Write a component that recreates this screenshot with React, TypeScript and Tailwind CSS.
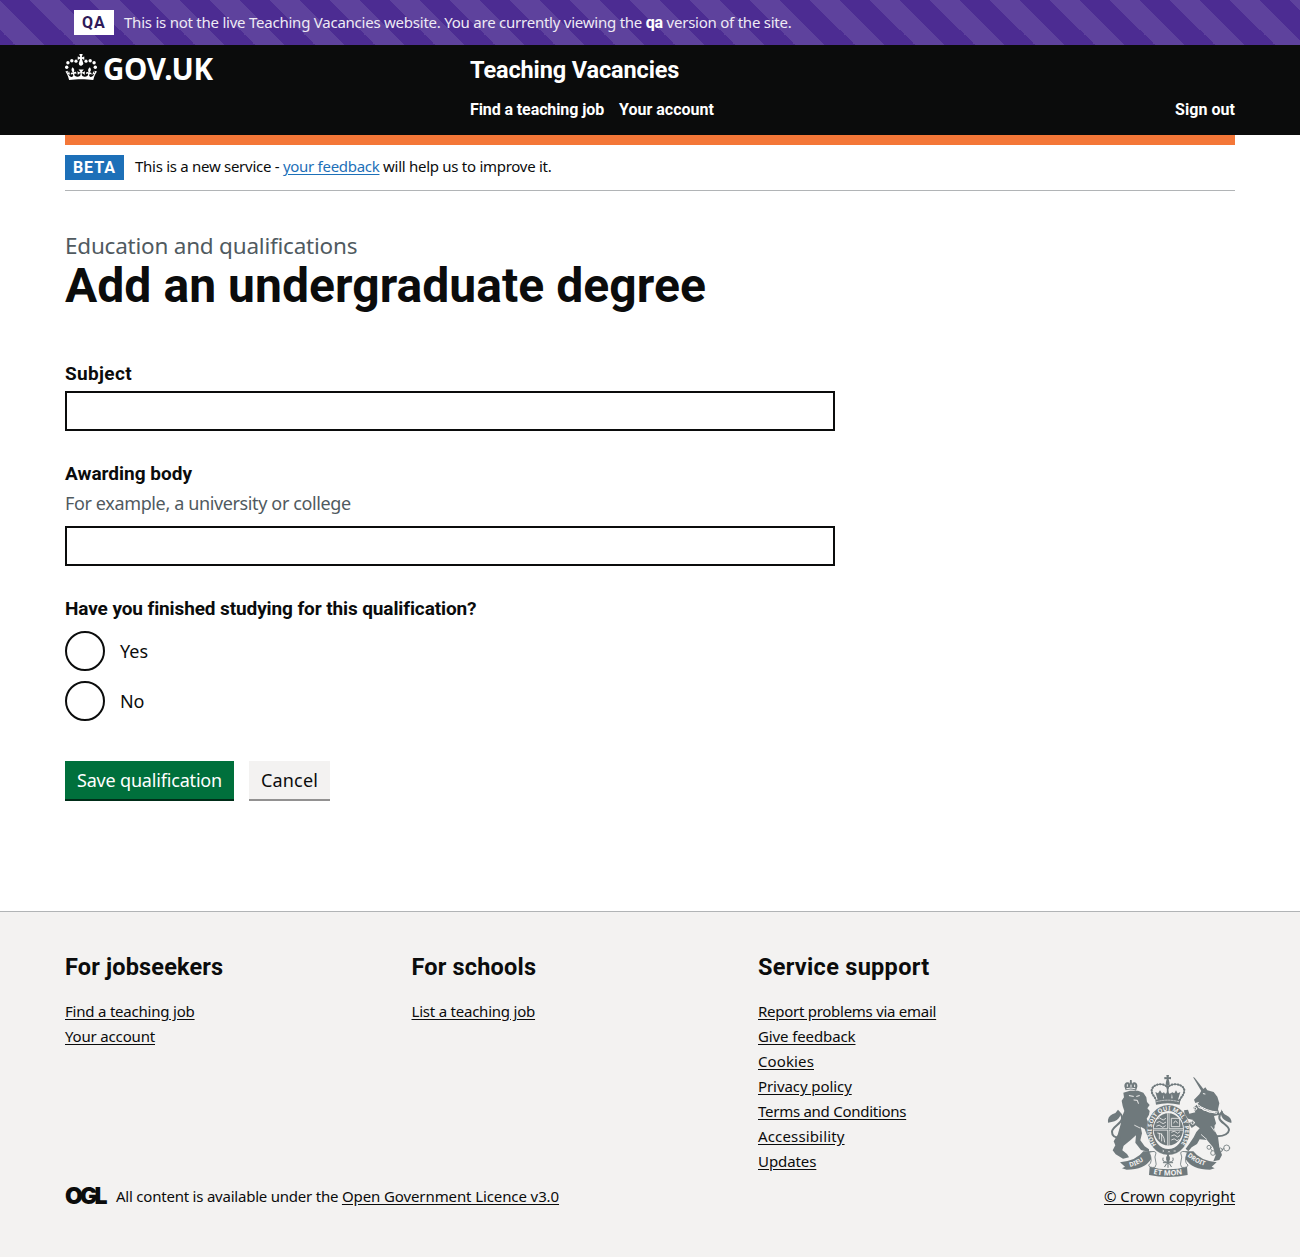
import React from "react";

const regular = "font-['Noto_Sans',sans-serif]";
const bold = "font-['Roboto',sans-serif] font-bold";

function Crown() {
  return (
    <svg className="mt-px h-[26px] w-8 shrink-0" viewBox="0 0 32 26" fill="currentColor" aria-hidden="true">
      <g>
        <circle cx="1.7" cy="13.3" r="1.7" />
        <circle cx="2.9" cy="8.8" r="1.7" />
        <circle cx="6.8" cy="6.7" r="1.7" />
        <circle cx="11" cy="7.2" r="1.6" />
        <circle cx="21" cy="7.2" r="1.6" />
        <circle cx="25.2" cy="6.7" r="1.7" />
        <circle cx="29.1" cy="8.8" r="1.7" />
        <circle cx="30.3" cy="13.3" r="1.7" />
      </g>
      <path d="M17 4.7l2.3 1.2V2.5l-2.3.7-.2-.2.9-3h-3.4l.9 3-.2.2c-.1.1-2.3-.7-2.3-.7v3.4L15 4.7c.1.1.1.2.2.2l-1.3 4c-.1.2-.1.4-.1.6 0 1.1.8 2 1.9 2.2h.7c1-.2 1.9-1.1 1.9-2.1 0-.2 0-.4-.1-.6l-1.3-4c-.1-.2 0-.2.1-.3" />
      <path
        transform="translate(0 -2.7) scale(1 .957)"
        d="M16 29.2c4.4 0 8.6.3 12.3.8 1.1-4.5 2.4-7 3.7-8.8l-2.5-.9c.2 1.3.3 1.9 0 2.7-.4-.4-.8-1.1-1.1-2.3l-1.2 4c.7-.5 1.3-.8 2-.9-1.1 2.5-2.6 3.1-3.5 3-1.1-.2-1.7-1.2-1.5-2.1.3-1.2 1.5-1.5 2.1-.1 1.1-2.3-.8-3-2-2.3 1.9-1.9 2.1-3.5.6-5.6-2.1 1.6-2.1 3.2-1.2 5.5-1.2-1.4-3.2-.6-2.5 1.6.9-1.4 2.1-.5 1.9.8-.2 1.1-1.7 2.1-3.5 1.9-2.7-.2-2.9-2.1-2.9-3.6.7-.1 1.9.5 2.9 1.9l.4-4.3c-1.1 1.1-2.1 1.4-3.2 1.4.4-1.2 2.1-3 2.1-3h-5.4s1.7 1.9 2.1 3c-1.1 0-2.1-.2-3.2-1.4l.4 4.3c1-1.4 2.2-2 2.9-1.9-.1 1.5-.2 3.4-2.9 3.6-1.9.2-3.4-.8-3.5-1.9-.2-1.3 1-2.2 1.9-.8.7-2.3-1.2-3-2.5-1.6.9-2.2.9-3.9-1.2-5.5-1.5 2-1.3 3.7.6 5.6-1.2-.7-3.1 0-2 2.3.6-1.4 1.8-1.1 2.1.1.2.9-.3 1.9-1.5 2.1-.9.2-2.4-.5-3.5-3 .6 0 1.2.3 2 .9l-1.2-4c-.3 1.1-.7 1.9-1.1 2.3-.3-.8-.2-1.4 0-2.7l-2.5.9c1.3 1.8 2.6 4.3 3.7 8.8 3.7-.5 7.9-.8 12.3-.8"
      />
    </svg>
  );
}

function RoyalArms() {
  const ink = "#6f797c";
  const paper = "#f3f2f1";
  const lettering = { fill: paper, fontFamily: "Noto Sans, sans-serif", fontWeight: 700 };
  return (
    <svg className="h-[102px] w-[125px]" viewBox="51 45 375 306" aria-hidden="true">
      <defs>
        <path id="garter" d="M199 255A50 61 0 1 1 271 255" />
        <path id="dieu" d="M120 321Q150 314 176 290" />
        <path id="etmon" d="M190 342Q235 351 281 342" />
        <path id="droit" d="M292 288Q318 312 358 321" />
      </defs>
      <g fill={ink} stroke="none">
        {/* lion */}
        <path d="M107 91l-4-12q0-11 9-12 5-1 7 4l1-11h5l1 11q3-5 8-4 9 2 8 13l-4 12q-16-6-31-1z" />
        <path d="M100 98l20-6 24 0 16 6 9 14 2 14 8 9-7 10 7 8-2 11-7 12 10 24 3 31-12-6-7-18-12-7 4 20-5 21 13 18 13 9 0 8-24-6-17-22 2-22-16 14-21 17-4 14 14 11 6 10-18 4-22-13-9-12 8-15-5-12 12-20 9-31 5-25 6-15-5-15-3-16 7-10z" />
        <path d="M54 188q-2-18 13-25 12-4 17-14 14 12 2 26-9 11-32 13z" />
        {/* unicorn */}
        <path d="M309 51l5 2 31 40-8 5z" />
        <path d="M334 92l12-10 6 9 19 5 11 14 6 20-4 18 5 16-17 4 6 22-6 18 12 22 4 32 8 23-8 15-18 4 7-18-8-24-18-22-22-2-8 14-16 10-10 12-8-8 12-16 12-18 8-16 10-11-12-9-12 8-9-14 14-10-16-4-10-12-2-13 12-2 4 12 18-4-6-14 12-10 6-8-12 4-4-10 16-16z" />
        <path d="M395 148q2 12 14 18 17 8 15 23-20-6-26-14-9-12-3-27z" />
        {/* central crown */}
        <path d="M229 45h8l-1 7 7-1v7l-7-1 2 9q3 8-5 12-8-4-5-12l2-9-7 1v-7l7 1z" />
        <path d="M196 120q37-12 75 0l-2 14q-36-9-71 0zM203 119l-7-23 8 4 6-9 6 9 7-4-4 21zM222 115l-1-17 7 3 5-10 5 10 8-3-2 17zM248 116l-3-20 8 4 5-9 5 9 8-4-7 23z" />
      </g>
      <g fill="none" stroke={ink} strokeLinecap="round">
        <path d="M89 232q-23 2-23-17c1-15 29-24 30-40 1-9-4-14-10-18" strokeWidth="6" />
        <path d="M382 229q33-2 35-19c0-14-27-22-29-36-1-9 3-14 8-18" strokeWidth="6" />
        <path d="M233 84c-5-16-45-16-48 7 0 12 8 17 13 28M233 84c5-16 47-16 50 7 0 12-8 17-13 28" strokeWidth="3" />
        <path d="M233 84c-5-16-45-16-48 7 0 12 8 17 13 28M233 84c5-16 47-16 50 7 0 12-8 17-13 28" strokeWidth="6.5" strokeDasharray="1.5 7" />
        <path d="M233 80v15" strokeWidth="5" />
        <ellipse cx="235" cy="210" rx="55" ry="66" strokeWidth="18" />
        <g strokeWidth="2.5">
          <circle cx="357" cy="262" r="6" /><circle cx="369" cy="279" r="7" /><circle cx="391" cy="270" r="6" /><circle cx="410" cy="264" r="9" />
          <path d="M362 266l4 6M376 276l9-4M397 268l5-2" />
        </g>
      </g>
      {/* face, crown and collar highlights */}
      <g fill="none" stroke={paper} strokeWidth="3" strokeLinecap="round">
        <path d="M118 107l12 2M140 109l8-2M132 120l10 1 3 9M112 74v5M123 75v5M134 75v5M110 86q13-4 25 0" />
        <path d="M200 125q33-9 66 0" strokeWidth="2" strokeDasharray="5 4" />
        <path d="M340 101l5 1M320 132q30 22 62 24M329 143q25 16 51 17M322 135l5 9 8-1 6 8 9 0 8 5 10-1 6 3" />
        <path d="M102 260l32-22M150 204l-16-8M350 238l-16-14M364 200l10 14" strokeWidth="2.5" />
        <circle cx="316" cy="146" r="4" /><circle cx="308" cy="188" r="5" /><circle cx="379" cy="198" r="4" />
      </g>
      {/* quartered shield inside the garter */}
      <ellipse cx="235" cy="208" rx="46" ry="51" fill={paper} />
      <ellipse cx="235" cy="208" rx="44" ry="48" fill={ink} />
      <g fill="none" stroke={paper} strokeWidth="2.5">
        <path d="M200 177q10-7 14 0t14-2M200 188q10-7 14 0t14-2M199 199q10-7 14 0t14-2M244 175h25v25h-25zM251 190q5-14 12 0M244 217q10-7 14 0t12-2M244 228q10-7 14 0t12-2M244 240q10-7 14 0t8-2" />
        <path d="M202 219q20 0 22 28M208 219v19M215 220v24" strokeWidth="2.5" />
        <path d="M235 160v96M191 208h88" strokeWidth="6.5" />
      </g>
      <path d="M235 160v96M191 208h88" stroke={ink} strokeWidth="2.5" />
      <ellipse cx="235" cy="210" rx="64" ry="75" fill="none" stroke={paper} strokeWidth="1.5" strokeDasharray="2 2" />
      <text fontSize="18" {...lettering}>
        <textPath href="#garter" textLength="262" lengthAdjust="spacing">HONI SOIT QUI MAL Y PENSE</textPath>
      </text>
      <path d="M218 271l4 4m0-4l-4 4M235 273l4 4m0-4l-4 4M252 271l4 4m0-4l-4 4" stroke={paper} strokeWidth="2" />
      {/* motto ribbon */}
      <g fill={ink}>
        <path d="M90 307q50-5 70-33l32 0-8 22q-20 33-74 33l-14-4 9-5z" />
        <path d="M380 307q-50-5-70-33l-32 0 8 22q20 33 74 33l14-4-9-5z" />
        <path d="M179 320q56 15 112 0l2 25q-58 12-116 0z" />
      </g>
      <g fill={paper} stroke={ink} strokeWidth="2.5">
        <path d="M178 277q18-6 20 2-6 12-1 24 4 10-2 19-18 2-19-7 14-8 2-38z" />
        <path d="M292 277q-18-6-20 2 6 12 1 24-4 10 2 19 18 2 19-7-14-8-2-38z" />
      </g>
      <text fontSize="19" {...lettering}><textPath href="#dieu">DIEU</textPath></text>
      <text fontSize="22" {...lettering}><textPath href="#etmon" textLength="88">ET MON</textPath></text>
      <text fontSize="19" {...lettering}><textPath href="#droit">DROIT</textPath></text>
      {/* floral badge */}
      <g fill={ink} stroke={ink} strokeWidth="3" strokeLinecap="round">
        <path d="M234 284q-9 12 0 22 9-10 0-22z" />
        <path d="M234 306v16M219 294q-4 13 11 12M249 294q4 13-11 12M224 320q5-11 10-11t10 11M220 308h28" fill="none" />
      </g>
    </svg>
  );
}

function Tag({ className, children }: { className: string; children: React.ReactNode }) {
  return <strong className={`block h-[25px] shrink-0 px-2 text-[16px] leading-[25px] ${bold} ${className}`}>{children}</strong>;
}

type FooterLink = { label: string; spacing: string };

function FooterColumn({ title, spacing, links }: { title: string; spacing: string; links: FooterLink[] }) {
  return (
    <div>
      <h2 className={`mb-[17px] text-[23.5px] leading-[30px] ${bold} ${spacing}`}>{title}</h2>
      <ul>
        {links.map((link) => (
          <li key={link.label} className="leading-[25px]">
            <a href="#" className={`underline underline-offset-2 ${link.spacing}`}>{link.label}</a>
          </li>
        ))}
      </ul>
    </div>
  );
}

function TextField({ id, hint, children }: { id: string; hint?: string; children: React.ReactNode }) {
  return (
    <div className="mb-[30px]">
      <label htmlFor={id} className={`mb-[5px] block text-[19px] leading-[25px] ${bold}`}>{children}</label>
      {hint && <div className="mb-2.5 text-[18px] leading-[25px] tracking-[-0.37px] text-[#505a5f]">{hint}</div>}
      <input id={id} type="text" className="block h-10 w-[770px] rounded-none border-2 border-[#0b0c0c] bg-white px-1" />
    </div>
  );
}

function Radio({ label, spacing }: { label: string; spacing: string }) {
  return (
    <label className="flex h-10 items-center gap-[15px] text-[18px]">
      <input type="radio" name="finished" className="size-10 appearance-none rounded-full border-2 border-[#0b0c0c]" />
      <span className={`leading-10 ${spacing}`}>{label}</span>
    </label>
  );
}

export default function App() {
  return (
    <div className={`flex min-h-[1257px] flex-col bg-white text-[15px] text-[#0b0c0c] ${regular}`}>
      <div className="h-[45px] bg-[#4c2c92] bg-[linear-gradient(45deg,transparent_25%,rgba(255,255,255,0.1)_25%,rgba(255,255,255,0.1)_50%,transparent_50%,transparent_75%,rgba(255,255,255,0.1)_75%)] bg-[length:60px_60px] pt-2.5 pl-[74px]">
        <div className="flex gap-2.5 text-[#eeeaf4]">
          <Tag className="w-10 bg-white tracking-[0.9px] text-[#2e1a58]">QA</Tag>
          <p className="leading-[25px] tracking-[-0.235px]">
            This is not the live Teaching Vacancies website. You are currently viewing the{" "}
            <strong className={`text-[16px] text-white ${bold}`}>qa</strong> version of the site.
          </p>
        </div>
      </div>

      <header className="h-[90px] bg-[#0b0c0c] px-[65px] pt-2 text-white">
        <div className="grid grid-cols-[405px_1fr]">
          <a href="#" className="flex gap-1.5 self-start">
            <Crown />
            <span className="mt-px h-[30px] text-[29.5px] leading-[30px] font-bold tracking-[-0.3px]">GOV.UK</span>
          </a>
          <div className="pt-0.5">
            <a href="#" className={`block text-[23.5px] leading-[30px] tracking-[-0.12px] ${bold}`}>Teaching Vacancies</a>
            <nav className={`mt-3 flex gap-[15px] text-[16px] leading-[25px] ${bold}`}>
              <a href="#" className="tracking-[-0.1px]">Find a teaching job</a>
              <a href="#">Your account</a>
              <a href="#" className="ml-auto tracking-[0.05px]">Sign out</a>
            </nav>
          </div>
        </div>
      </header>

      <div className="mx-[65px] h-[56px] border-t-10 border-b border-t-[#f47738] border-b-[#b1b4b6]">
        <div className="flex gap-[11px] pt-2.5">
          <Tag className="w-[59px] bg-[#1d70b8] tracking-[0.9px] text-white">BETA</Tag>
          <p className="-mt-px leading-[25px] tracking-[-0.28px]">
            This is a new service -{" "}
            <a href="#" className="text-[#1d70b8] underline underline-offset-2">your feedback</a>{" "}
            will help us to improve it.
          </p>
        </div>
      </div>

      <main className="grow px-[65px] pt-[39px]">
        <div className="text-[22.5px] leading-[31px] tracking-[-0.22px] text-[#505a5f]">Education and qualifications</div>
        <h1 className={`mb-[51px] text-[48px] leading-[49px] tracking-[0.05px] ${bold}`}>Add an undergraduate degree</h1>
        <form>
          <TextField id="subject"><span className="tracking-[0.35px]">Subject</span></TextField>
          <TextField id="awarding-body" hint="For example, a university or college">Awarding body</TextField>
          <fieldset>
            <legend className={`mb-2.5 block text-[19px] leading-[25px] tracking-[-0.11px] ${bold}`}>
              Have you finished studying for this qualification?
            </legend>
            <div className="flex flex-col gap-2.5">
              <Radio label="Yes" spacing="tracking-normal" />
              <Radio label="No" spacing="tracking-[-0.2px]" />
            </div>
          </fieldset>
          <div className="mt-10 flex gap-[15px] text-[18px] leading-[38px]">
            <button type="button" className="h-[38px] w-[169px] bg-[#00703c] tracking-[-0.18px] text-white shadow-[0_2px_0_#002d18]">Save qualification</button>
            <button type="button" className="h-[38px] w-[81px] bg-[#f3f2f1] tracking-[0.16px] shadow-[0_2px_0_#929191]">Cancel</button>
          </div>
        </form>
      </main>

      <footer className="h-[346px] border-t border-[#b1b4b6] bg-[#f3f2f1] px-[65px] pt-10">
        <div className="grid h-[222px] grid-cols-[346.5px_346.5px_1fr]">
          <FooterColumn
            title="For jobseekers"
            spacing="tracking-[0.16px]"
            links={[
              { label: "Find a teaching job", spacing: "tracking-[-0.21px]" },
              { label: "Your account", spacing: "tracking-[-0.17px]" },
            ]}
          />
          <FooterColumn title="For schools" spacing="tracking-[0.18px]" links={[{ label: "List a teaching job", spacing: "tracking-[-0.22px]" }]} />
          <FooterColumn
            title="Service support"
            spacing="tracking-[0.3px]"
            links={[
              { label: "Report problems via email", spacing: "tracking-[-0.27px]" },
              { label: "Give feedback", spacing: "tracking-[-0.11px]" },
              { label: "Cookies", spacing: "tracking-[0.12px]" },
              { label: "Privacy policy", spacing: "tracking-[-0.08px]" },
              { label: "Terms and Conditions", spacing: "tracking-[-0.27px]" },
              { label: "Accessibility", spacing: "tracking-[0.15px]" },
              { label: "Updates", spacing: "tracking-[-0.08px]" },
            ]}
          />
        </div>
        <div className="-mt-[99px] flex items-end justify-between">
          <div className="flex leading-[25px]">
            <span className="w-[51px] font-['Inter',sans-serif] text-[23px] font-black tracking-[-2.9px]">OGL</span>
            <p className="tracking-[-0.22px]">
              All content is available under the{" "}
              <a href="#" className="tracking-[-0.1px] underline underline-offset-2">Open Government Licence v3.0</a>
            </p>
          </div>
          <a href="#" className="flex flex-col items-center gap-[7px] leading-[25px] tracking-[-0.08px] underline underline-offset-2">
            <RoyalArms />
            © Crown copyright
          </a>
        </div>
      </footer>
    </div>
  );
}
